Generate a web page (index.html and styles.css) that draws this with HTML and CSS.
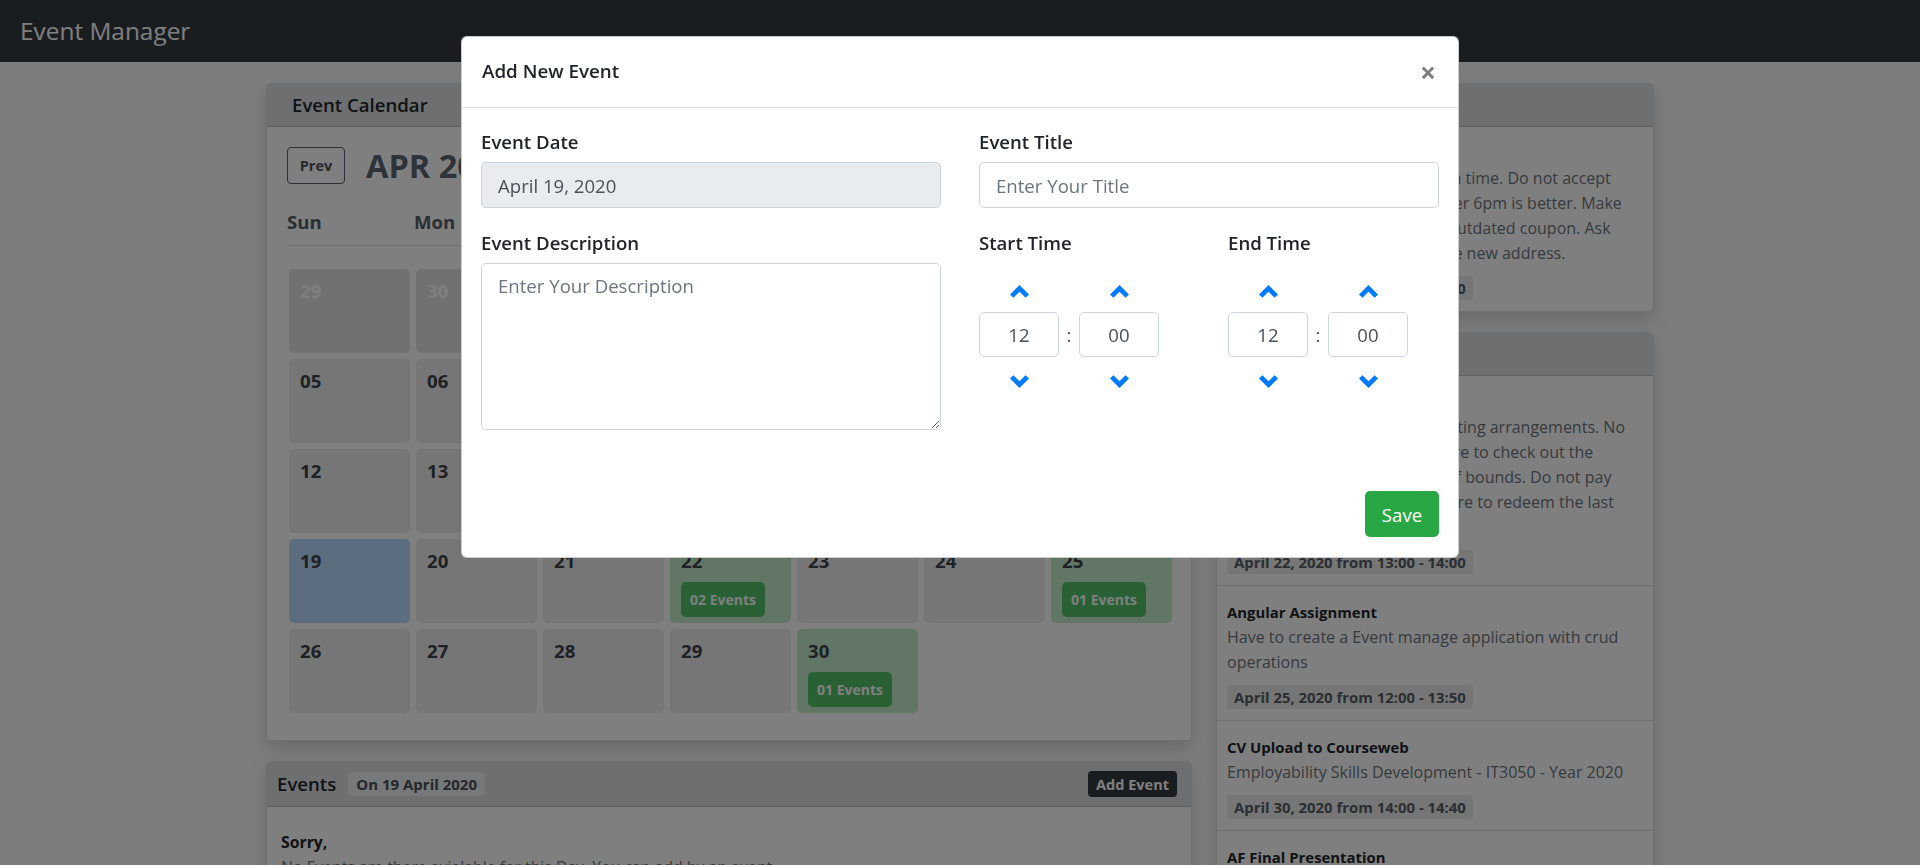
FILE: index.html
```html
<!DOCTYPE html>
<html lang="en">
<head>
<meta charset="utf-8">
<title>Event Manager</title>
<link rel="stylesheet" href="styles.css">
</head>
<body>
<nav class="navbar"><span class="brand">Event Manager</span></nav>

<main class="container">
  <div class="main-col">
    <section class="card">
      <div class="card-header cal-header">Event Calendar</div>
      <div class="cal-body">
        <div class="cal-controls">
          <button class="btn-outline">Prev</button>
          <h3 class="month">APR 2020</h3>
          <button class="btn-outline next">Next</button>
        </div>
        <div class="weekdays">
          <span>Sun</span><span>Mon</span><span>Tue</span><span>Wed</span><span>Thu</span><span>Fri</span><span>Sat</span>
        </div>
        <div class="days">
          <div class="day muted">29</div><div class="day muted">30</div><div class="day muted">31</div><div class="day">01</div><div class="day">02</div><div class="day">03</div><div class="day">04</div>
          <div class="day">05</div><div class="day">06</div><div class="day">07</div><div class="day">08</div><div class="day">09</div><div class="day">10</div><div class="day">11</div>
          <div class="day">12</div><div class="day">13</div><div class="day">14</div><div class="day">15</div><div class="day">16</div><div class="day">17</div><div class="day">18</div>
          <div class="day today">19</div><div class="day">20</div><div class="day">21</div><div class="day has-event">22<span class="ev-badge">02 Events</span></div><div class="day">23</div><div class="day">24</div><div class="day has-event">25<span class="ev-badge">01 Events</span></div>
          <div class="day">26</div><div class="day">27</div><div class="day">28</div><div class="day">29</div><div class="day has-event">30<span class="ev-badge">01 Events</span></div>
        </div>
      </div>
    </section>

    <section class="card events-card">
      <div class="card-header ev-header">
        <span class="ev-title">Events</span>
        <span class="date-badge">On 19 April 2020</span>
        <button class="btn-dark">Add Event</button>
      </div>
      <div class="ev-body">
        <p class="sorry">Sorry,</p>
        <p class="none">No Events are there avialable for this Day. You can add by an event.</p>
      </div>
    </section>
  </div>

  <aside class="side-col">
    <section class="card">
      <div class="card-header side-header">Ongoing Event</div>
      <div class="item">
        <div class="item-title">Shopping Day</div>
        <div class="item-desc lines">Get the order from the shop on time. Do not accept<br>any late deliveries. Booking after 6pm is better. Make<br>sure not to use an expired or outdated coupon. Ask<br>the owners for directions to the new address.</div>
        <span class="item-date">April 19, 2020 from 09:00 - 10:00</span>
      </div>
    </section>

    <section class="card side-second">
      <div class="card-header side-header">Upcoming Events</div>
      <div class="item">
        <div class="item-title">Team Dinner</div>
        <div class="item-desc lines">Call the hotel to confirm all seating arrangements. No<br>outside food allowed. Make sure to check out the<br>parking lot, since few are out of bounds. Do not pay<br>in advance for snacks. Make sure to redeem the last<br>visit's discount voucher.</div>
        <span class="item-date">April 22, 2020 from 13:00 - 14:00</span>
      </div>
      <div class="item">
        <div class="item-title">Angular Assignment</div>
        <div class="item-desc">Have to create a Event manage application with crud operations</div>
        <span class="item-date">April 25, 2020 from 12:00 - 13:50</span>
      </div>
      <div class="item">
        <div class="item-title">CV Upload to Courseweb</div>
        <div class="item-desc">Employability Skills Development - IT3050 - Year 2020</div>
        <span class="item-date">April 30, 2020 from 14:00 - 14:40</span>
      </div>
      <div class="item">
        <div class="item-title">AF Final Presentation</div>
        <div class="item-desc">Final presentation of the application framework project</div>
        <span class="item-date">May 05, 2020 from 10:00 - 11:00</span>
      </div>
    </section>
  </aside>
</main>

<div class="backdrop"></div>

<div class="modal">
  <div class="modal-header">
    <h5 class="modal-title">Add New Event</h5>
    <button class="close" aria-label="Close">&times;</button>
  </div>
  <div class="modal-body">
    <div class="form-col">
      <div class="group">
        <label>Event Date</label>
        <input class="input" type="text" value="April 19, 2020" disabled>
      </div>
      <div class="group">
        <label>Event Description</label>
        <textarea class="input textarea" placeholder="Enter Your Description"></textarea>
      </div>
    </div>
    <div class="form-col">
      <div class="group">
        <label>Event Title</label>
        <input class="input" type="text" placeholder="Enter Your Title">
      </div>
      <div class="times">
        <div class="group">
          <label>Start Time</label>
          <div class="picker">
            <span class="chev up"><svg viewBox="0 0 19 13" width="19" height="13"><polygon points="9.5,0 19,9.4 15.6,12.8 9.5,6.8 3.4,12.8 0,9.4"/></svg></span>
            <span></span>
            <span class="chev up"><svg viewBox="0 0 19 13" width="19" height="13"><polygon points="9.5,0 19,9.4 15.6,12.8 9.5,6.8 3.4,12.8 0,9.4"/></svg></span>
            <input class="time-input" type="text" value="12">
            <span class="colon">:</span>
            <input class="time-input" type="text" value="00">
            <span class="chev down"><svg viewBox="0 0 19 13" width="19" height="13"><polygon points="9.5,13 19,3.6 15.6,0.2 9.5,6.2 3.4,0.2 0,3.6"/></svg></span>
            <span></span>
            <span class="chev down"><svg viewBox="0 0 19 13" width="19" height="13"><polygon points="9.5,13 19,3.6 15.6,0.2 9.5,6.2 3.4,0.2 0,3.6"/></svg></span>
          </div>
        </div>
        <div class="group">
          <label>End Time</label>
          <div class="picker">
            <span class="chev up"><svg viewBox="0 0 19 13" width="19" height="13"><polygon points="9.5,0 19,9.4 15.6,12.8 9.5,6.8 3.4,12.8 0,9.4"/></svg></span>
            <span></span>
            <span class="chev up"><svg viewBox="0 0 19 13" width="19" height="13"><polygon points="9.5,0 19,9.4 15.6,12.8 9.5,6.8 3.4,12.8 0,9.4"/></svg></span>
            <input class="time-input" type="text" value="12">
            <span class="colon">:</span>
            <input class="time-input" type="text" value="00">
            <span class="chev down"><svg viewBox="0 0 19 13" width="19" height="13"><polygon points="9.5,13 19,3.6 15.6,0.2 9.5,6.2 3.4,0.2 0,3.6"/></svg></span>
            <span></span>
            <span class="chev down"><svg viewBox="0 0 19 13" width="19" height="13"><polygon points="9.5,13 19,3.6 15.6,0.2 9.5,6.2 3.4,0.2 0,3.6"/></svg></span>
          </div>
        </div>
      </div>
    </div>
  </div>
  <div class="modal-footer">
    <button class="btn-save">Save</button>
  </div>
</div>
</body>
</html>
```

FILE: styles.css
```css
* { box-sizing: border-box; }

html, body {
  margin: 0;
  height: 865px;
  overflow: hidden;
}

body {
  font-family: "Open Sans", "Noto Sans", sans-serif;
  background: #fafafa;
  color: #212529;
}

button, input, textarea {
  font-family: "Open Sans", "Noto Sans", sans-serif;
}

/* Navbar */
.navbar {
  height: 62px;
  background: #343a40;
  display: flex;
  align-items: center;
  padding: 0 20px;
}
.brand {
  color: #fff;
  font-size: 24.4px;
  line-height: 30px;
}

/* Layout */
.container {
  width: 1388px;
  margin: 21px auto 0;
  display: grid;
  grid-template-columns: 926px 438px;
  gap: 24px;
  align-items: start;
}

.card {
  background: #fff;
  border: 1px solid rgba(0, 0, 0, 0.125);
  border-radius: 5px;
  box-shadow: 0 8px 18px rgba(0, 0, 0, 0.16);
  overflow: hidden;
}
.card-header {
  background: #dcdfe3;
  border-bottom: 1px solid rgba(0, 0, 0, 0.125);
  font-size: 18.6px;
  font-weight: 600;
  line-height: 30px;
}

/* Calendar */
.cal-header { padding: 6px 25px; }
.cal-body { padding: 20px 19px 27px 20px; }
.cal-controls {
  display: flex;
  align-items: center;
  gap: 21px;
}
.btn-outline {
  height: 37px;
  width: 58px;
  border: 1px solid #5a6169;
  border-radius: 4px;
  background: transparent;
  color: #4b535b;
  font-size: 14.5px;
  font-weight: 700;
  padding: 0;
}
.btn-outline.next { margin-left: auto; }
.month {
  margin: 0;
  font-size: 32.5px;
  font-weight: 700;
  line-height: 37px;
  color: #5c6672;
}
.weekdays {
  margin-top: 23px;
  display: grid;
  grid-template-columns: repeat(7, 121px);
  column-gap: 6px;
  padding-bottom: 8px;
  border-bottom: 1px solid #dee2e6;
  font-size: 18.6px;
  font-weight: 700;
  line-height: 30px;
  color: #555e69;
}
.days {
  margin-top: 23px;
  padding-left: 2px;
  display: grid;
  grid-template-columns: repeat(7, 121px);
  grid-auto-rows: 84px;
  gap: 6px;
}
.day {
  background: #ececec;
  border-radius: 5px;
  padding: 7px 11px;
  font-size: 18.6px;
  font-weight: 700;
  line-height: 30px;
  color: #3d434a;
}
.day.muted { background: #e3e3e3; color: #ffffff; }
.day.today { background: #b8daff; }
.day.has-event { background: #c4eccd; }
.ev-badge {
  display: table;
  margin-top: 6px;
  height: 35px;
  line-height: 35px;
  padding: 0 9px;
  background: #52c26a;
  color: #fff;
  border-radius: 5px;
  font-size: 14px;
  font-weight: 700;
}

/* Events card */
.events-card { margin-top: 20px; }
.ev-header {
  display: flex;
  align-items: center;
  padding: 7px 14px 7px 10px;
}
.date-badge {
  margin-left: 12px;
  height: 24px;
  line-height: 24px;
  padding: 0 8px;
  background: #eef0f2;
  color: #4a5057;
  border-radius: 4px;
  font-size: 15px;
  font-weight: 700;
}
.btn-dark {
  margin-left: auto;
  height: 26px;
  padding: 0 8px;
  background: #343a40;
  color: #fff;
  border: none;
  border-radius: 4px;
  font-size: 14.5px;
  font-weight: 700;
}
.ev-body { padding: 23px 14px; }
.ev-body p { margin: 0; line-height: 25px; }
.sorry { font-size: 15.8px; font-weight: 700; }
.none { font-size: 15.8px; color: #6c757d; }

/* Side column */
.side-header { padding: 6px 10px; }
.side-second { margin-top: 20px; }
.item {
  padding: 14px 10px 11px;
  border-bottom: 1px solid rgba(0, 0, 0, 0.125);
}
.side-col .card > .item:last-child { border-bottom: none; }
.side-second > .item:last-child { border-bottom: 1px solid rgba(0, 0, 0, 0.125); }
.item-title {
  font-size: 14.9px;
  font-weight: 700;
  line-height: 25px;
}
.item-desc {
  font-size: 16px;
  line-height: 25px;
  color: #6c757d;
}
.item-desc.lines { white-space: nowrap; }
.item-date {
  display: inline-block;
  margin-top: 10px;
  height: 24px;
  line-height: 24px;
  padding: 0 7px;
  background: #ececec;
  color: #565d65;
  border-radius: 3px;
  font-size: 14.9px;
  font-weight: 700;
}

/* Modal */
.backdrop {
  position: fixed;
  inset: 0;
  background: rgba(0, 0, 0, 0.5);
}
.modal {
  position: fixed;
  top: 36px;
  left: 461px;
  width: 998px;
  background: #fff;
  border: 1px solid rgba(0, 0, 0, 0.2);
  border-radius: 6px;
}
.modal-header {
  display: flex;
  align-items: flex-start;
  padding: 19px 20px 20px;
  border-bottom: 1px solid #dee2e6;
}
.modal-title {
  margin: 0;
  font-size: 18.8px;
  font-weight: 600;
  line-height: 30px;
  color: #212529;
}
.close {
  margin: -19px -20px -20px auto;
  padding: 20px 22px 20px 20px;
  background: transparent;
  border: none;
  font-size: 28px;
  font-weight: 700;
  line-height: 30px;
  color: #000;
  opacity: 0.5;
}
.modal-body {
  display: grid;
  grid-template-columns: 460px 460px;
  column-gap: 38px;
  padding: 19px 19px 20px;
}
.group { margin-bottom: 20px; }
.group label {
  display: block;
  margin-bottom: 5px;
  font-size: 18.6px;
  font-weight: 600;
  line-height: 30px;
  color: #212529;
}
.input {
  display: block;
  width: 100%;
  height: 46px;
  padding: 0 16px;
  border: 1px solid #ced4da;
  border-radius: 5px;
  font-size: 18.6px;
  color: #495057;
  background: #fff;
}
.input:disabled { background: #e9ecef; color: #495057; }
.input::placeholder { color: #6c757d; }
.textarea {
  height: 167px;
  padding: 7px 16px;
  line-height: 30px;
}
.times {
  display: grid;
  grid-template-columns: 211px 211px;
  column-gap: 38px;
}
.times .group { margin-bottom: 0; }
.picker {
  display: grid;
  grid-template-columns: 80px 20px 80px;
  grid-template-rows: 49px 45px 36px;
}
.chev {
  display: flex;
  justify-content: center;
  fill: #007bff;
}
.chev.up { align-items: flex-start; padding-top: 22px; }
.chev.down { align-items: flex-start; padding-top: 18px; }
.chev svg { display: block; }
.time-input {
  width: 80px;
  height: 45px;
  border: 1px solid #ced4da;
  border-radius: 5px;
  text-align: center;
  font-size: 18.6px;
  color: #495057;
  padding: 0;
}
.colon {
  display: flex;
  align-items: center;
  justify-content: center;
  font-size: 18.6px;
  color: #495057;
}
.modal-footer {
  display: flex;
  justify-content: flex-end;
  padding: 21px 19px 20px;
}
.btn-save {
  width: 74px;
  height: 46px;
  background: #28a745;
  color: #fff;
  border: none;
  border-radius: 5px;
  font-size: 18.6px;
}
```
